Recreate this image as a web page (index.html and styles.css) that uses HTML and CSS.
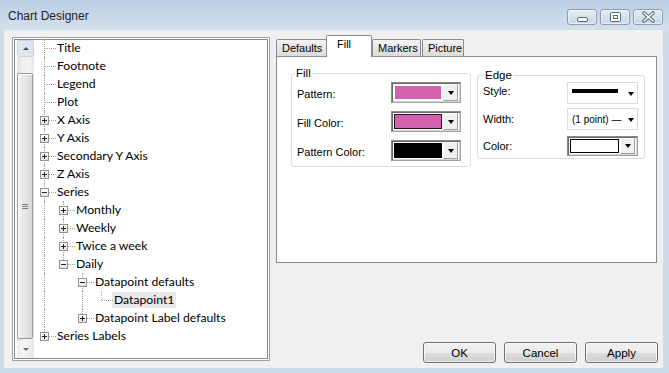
FILE: index.html
```html
<!DOCTYPE html>
<html lang="en">
<head>
  <meta charset="UTF-8">
  <title>Chart Designer</title>
  <link rel="stylesheet" href="styles.css">
</head>
<body>
<div class="window">
  <div class="titlebar">
    <span class="caption">Chart Designer</span>
    <div class="capbtns">
      <span class="capbtn">
        <svg width="28" height="14" viewBox="0 0 28 14"><rect x="9.5" y="7.5" width="10" height="4" rx="1.5" fill="#fff" stroke="#56647a"/></svg>
      </span>
      <span class="capbtn">
        <svg width="28" height="14" viewBox="0 0 28 14"><rect x="9.5" y="2.5" width="10" height="9" rx="1" fill="#fff" stroke="#56647a"/><rect x="12.5" y="5.5" width="4" height="3" fill="none" stroke="#56647a"/></svg>
      </span>
      <span class="capbtn">
        <svg width="27" height="14" viewBox="0 0 27 14"><path d="M9 3 L18 11 M18 3 L9 11" stroke="#56647a" stroke-width="3.6" stroke-linecap="round"/><path d="M9 3 L18 11 M18 3 L9 11" stroke="#fff" stroke-width="1.6" stroke-linecap="round"/></svg>
      </span>
    </div>
  </div>

  <div class="client">
    <!-- tree of chart parts -->
    <div class="tree">
      <div class="vscroll">
        <div class="sbtn up"><span class="tri-up"></span></div>
        <div class="track">
          <div class="thumb"><span class="grip"></span></div>
        </div>
        <div class="sbtn down"><span class="tri-down"></span></div>
      </div>
      <div class="nodes">
        <div class="row"><span class="c t"></span><span class="txt">Title</span></div>
        <div class="row"><span class="c t"></span><span class="txt">Footnote</span></div>
        <div class="row"><span class="c t"></span><span class="txt">Legend</span></div>
        <div class="row"><span class="c t"></span><span class="txt">Plot</span></div>
        <div class="row"><span class="c t"><i class="box plus"></i></span><span class="txt">X Axis</span></div>
        <div class="row"><span class="c t"><i class="box plus"></i></span><span class="txt">Y Axis</span></div>
        <div class="row"><span class="c t"><i class="box plus"></i></span><span class="txt">Secondary Y Axis</span></div>
        <div class="row"><span class="c t"><i class="box plus"></i></span><span class="txt">Z Axis</span></div>
        <div class="row"><span class="c t"><i class="box"></i></span><span class="txt">Series</span></div>
        <div class="row"><span class="c v"></span><span class="c t"><i class="box plus"></i></span><span class="txt">Monthly</span></div>
        <div class="row"><span class="c v"></span><span class="c t"><i class="box plus"></i></span><span class="txt">Weekly</span></div>
        <div class="row"><span class="c v"></span><span class="c t"><i class="box plus"></i></span><span class="txt">Twice a week</span></div>
        <div class="row"><span class="c v"></span><span class="c l"><i class="box"></i></span><span class="txt">Daily</span></div>
        <div class="row"><span class="c v"></span><span class="c"></span><span class="c t"><i class="box"></i></span><span class="txt">Datapoint defaults</span></div>
        <div class="row"><span class="c v"></span><span class="c"></span><span class="c v"></span><span class="c l"></span><span class="txt sel">Datapoint1</span></div>
        <div class="row"><span class="c v"></span><span class="c"></span><span class="c l"><i class="box plus"></i></span><span class="txt">Datapoint Label defaults</span></div>
        <div class="row"><span class="c l"><i class="box plus"></i></span><span class="txt">Series Labels</span></div>
      </div>
    </div>

    <div class="side">
      <div class="tabs">
        <span class="tab t-defaults">Defaults</span>
        <span class="tab t-fill active">Fill</span>
        <span class="tab t-markers">Markers</span>
        <span class="tab t-picture">Picture</span>
      </div>
      <div class="panel">
        <fieldset class="group g-fill">
          <legend>Fill</legend>
          <div class="frow first">
            <span>Pattern:</span>
            <span class="dd"><span class="sw pattern"></span><span class="arr"></span></span>
          </div>
          <div class="frow">
            <span>Fill Color:</span>
            <span class="dd"><span class="sw fillc"></span><span class="arr"></span></span>
          </div>
          <div class="frow">
            <span>Pattern Color:</span>
            <span class="dd"><span class="sw black"></span><span class="arr"></span></span>
          </div>
        </fieldset>

        <fieldset class="group g-edge">
          <legend>Edge</legend>
          <div class="erow r-style">
            <span>Style:</span>
            <span class="fdd"><span class="stroke"></span><span class="small-arr"></span></span>
          </div>
          <div class="erow r-width">
            <span>Width:</span>
            <span class="fdd"><span class="wtxt">(1 point) —</span><span class="small-arr"></span></span>
          </div>
          <div class="erow r-color">
            <span>Color:</span>
            <span class="dd"><span class="sw white"></span><span class="arr"></span></span>
          </div>
        </fieldset>
      </div>

      <div class="btns">
        <button class="btn">OK</button>
        <button class="btn">Cancel</button>
        <button class="btn">Apply</button>
      </div>
    </div>
  </div>
</div>
</body>
</html>
```

FILE: styles.css
```css
* {
  box-sizing: border-box;
}

body {
  margin: 0;
  background: #cedcec;
  font-family: "Liberation Sans", Arial, sans-serif;
}

.window {
  width: 669px;
  height: 373px;
  background: #cfdcec;
  padding: 0 6px 5px 4px;
}

/* title bar */
.titlebar {
  height: 30px;
  margin: 0 -6px 0 -4px;
  padding: 0 6px 0 8px;
  display: flex;
  align-items: flex-start;
  background: linear-gradient(#b9cde3, #cbdaea 60%, #d2dfed);
}

.caption {
  font-size: 12px;
  color: #222;
  line-height: 14px;
  margin-top: 9px;
}

.capbtns {
  margin-left: auto;
  margin-top: 9px;
  display: flex;
  gap: 3px;
}

.capbtn {
  width: 30px;
  height: 16px;
  border: 1px solid #8b9bb0;
  border-radius: 3px;
  background: linear-gradient(#e6edf5, #d6e1ec 50%, #cad7e6);
  box-shadow: inset 0 0 0 1px rgba(255,255,255,0.55);
  display: flex;
  align-items: center;
  justify-content: center;
}

.capbtn svg {
  display: block;
}

/* client area */
.client {
  height: 338px;
  background: #f0f0f0;
  display: flex;
  align-items: flex-start;
  padding: 5px 0 0 8px;
}

.tree {
  width: 258px;
  height: 324px;
  margin-top: 2px;
  background: #fff;
  border: 1px solid #a0a0a0;
  box-shadow: inset 0 0 0 1px #fff, inset 0 0 0 2px #828790;
  padding: 2px 2px 2px 4px;
  display: flex;
  align-items: flex-start;
}

.vscroll {
  width: 17px;
  height: 318px;
  display: flex;
  flex-direction: column;
  flex: none;
}

.sbtn {
  height: 17px;
  display: flex;
  align-items: center;
  justify-content: center;
}

.sbtn.up {
  background: linear-gradient(90deg, #e3ebf4, #d9e4ef);
  border: 1px solid #c9d5e2;
  border-radius: 2px;
}

.sbtn.down {
  background: linear-gradient(90deg, #ececec, #f6f6f6 40%, #e6e6e6);
}

.tri-up {
  width: 0;
  height: 0;
  border-style: solid;
  border-color: transparent transparent #4d4d4d;
  border-width: 0 3px 3px;
}

.tri-down {
  width: 0;
  height: 0;
  border-style: solid;
  border-color: #6a6a6a transparent transparent;
  border-width: 3px 3px 0;
}

.track {
  flex: 1;
  padding: 16px 1px 2px 0;
  background: linear-gradient(90deg, #e0e0e0, #efefef 30%, #f3f3f3 70%, #e8e8e8);
}

.thumb {
  height: 266px;
  border: 1px solid #979797;
  border-radius: 2px;
  background: linear-gradient(90deg, #f4f4f4, #e6e6e6 50%, #d8d8d8);
  box-shadow: inset 1px 1px 0 #fff;
  display: flex;
  align-items: center;
  justify-content: center;
}

.grip {
  width: 6px;
  height: 5px;
  background: repeating-linear-gradient(#7a7a7a 0 1px, transparent 1px 2px);
}

/* tree rows */
.nodes {
  margin: -1px 0 0 1px;
  font-family: Lato, "Liberation Sans", sans-serif;
  font-size: 12.2px;
  color: #000;
}

.row {
  display: flex;
  height: 18px;
}

.c {
  width: 19px;
  flex: none;
  position: relative;
}

.c.v::before,
.c.t::before,
.c.l::before {
  content: '';
  position: absolute;
  left: 9px;
  top: 0;
  bottom: 0;
  border-left: 1px dotted #a0a0a0;
}

.c.l::before {
  bottom: 9px;
}

.c.t::after,
.c.l::after {
  content: '';
  position: absolute;
  left: 10px;
  top: 9px;
  width: 11px;
  border-top: 1px dotted #a0a0a0;
}

.box {
  position: absolute;
  left: 5px;
  top: 5px;
  width: 9px;
  height: 9px;
  border: 1px solid #919191;
  background: linear-gradient(#fff, #e4e4e4);
  z-index: 1;
}

.box::before {
  content: '';
  position: absolute;
  left: 1px;
  top: 3px;
  width: 5px;
  height: 1px;
  background: #222;
}

.box.plus::after {
  content: '';
  position: absolute;
  left: 3px;
  top: 1px;
  width: 1px;
  height: 5px;
  background: #222;
}

.txt {
  margin: 1px 0 0 1px;
  padding: 0 2px;
  height: 16px;
  line-height: 16px;
  white-space: nowrap;
}

.txt.sel {
  background: #e8e8e8;
}

/* right side */
.side {
  margin-left: 4px;
  width: 384px;
  font-size: 11px;
  color: #000;
}

.tabs {
  display: flex;
  align-items: flex-end;
  height: 21px;
  padding-left: 2px;
}

.tab {
  height: 17px;
  border: 1px solid #898c95;
  border-bottom: 0;
  border-radius: 2px 2px 0 0;
  background: linear-gradient(#f4f4f4, #e7e7e7 50%, #dcdcdc);
  line-height: 15px;
  padding: 1px 0 0 5px;
}

.t-defaults { width: 51px; }
.t-fill { width: 46px; }
.t-markers { width: 49px; }
.t-picture { width: 42px; margin-left: 1px; }

.tab.active {
  height: 22px;
  margin-bottom: -1px;
  background: #fff;
  padding: 1px 0 0 10px;
  position: relative;
  z-index: 1;
  margin-left: -1px;
}

.panel {
  margin-left: 2px;
  width: 381px;
  height: 207px;
  border: 1px solid #898c95;
  background: #fff;
  display: flex;
  align-items: flex-start;
  gap: 6px;
  padding: 9px 0 0 14px;
}

.group {
  margin: 0;
  padding: 0 0 5px;
  border: 1px solid #d5dfe5;
  border-radius: 3px;
  min-width: 0;
}

.group legend {
  padding: 0 1px;
  margin-left: 3px;
  line-height: 14px;
  font-size: 11.5px;
}

.g-fill {
  width: 180px;
}

.g-edge {
  width: 168px;
  margin-top: 2px;
  padding-bottom: 2px;
}

.g-edge legend {
  margin-left: 6px;
}

.frow {
  display: flex;
  align-items: center;
  justify-content: space-between;
  height: 21px;
  padding: 0 9px 0 5px;
  margin-top: 8px;
}

.frow span:first-child {
  padding-top: 2px;
}

.frow.first {
  margin-top: 2px;
}

.erow {
  display: flex;
  align-items: center;
  justify-content: space-between;
  padding: 0 6px 0 5px;
}

.r-style { height: 22px; }
.r-width { height: 22px; margin-top: 4px; }
.r-color { height: 20px; margin-top: 6px; }

.r-style span:first-child {
  margin-top: -4px;
}

/* sunken colour dropdown */
.dd {
  width: 70px;
  height: 21px;
  display: flex;
  border: 1px solid #a0a0a0;
  border-top-color: #8a8a8a;
  border-left-color: #8a8a8a;
  box-shadow: inset 1px 1px 0 #6a6a6a, inset -1px -1px 0 #d8d8d8;
  padding: 2px 2px 2px 2px;
  background: #fff;
}

.r-color .dd {
  width: 71px;
  height: 20px;
}

.sw {
  flex: 1;
  margin-right: 1px;
}

.sw.pattern {
  background: #d262ad;
  border: 1px solid #fff;
}

.sw.fillc {
  background: #d262ad;
  border: 1px solid #2b1024;
}

.sw.black {
  background: #000;
}

.sw.white {
  background: #fff;
  border: 1px solid #000;
}

.arr {
  width: 15px;
  flex: none;
  margin: -1px 0 -1px 0;
  background: #f0f0f0;
  border: 1px solid;
  border-color: #fff #a0a0a0 #a0a0a0 #fff;
  display: flex;
  align-items: center;
  justify-content: center;
}

.arr::after {
  content: '';
  border-style: solid;
  border-color: #000 transparent transparent;
  border-width: 4px 3.5px 0;
}

/* flat dropdowns */
.fdd {
  width: 71px;
  height: 22px;
  border: 1px solid #dcdcdc;
  background: #fff;
  display: flex;
  align-items: center;
  padding: 0 3px 0 4px;
}

.stroke {
  width: 46px;
  height: 4px;
  background: #000;
}

.wtxt {
  font-size: 10px;
  white-space: nowrap;
}

.small-arr {
  margin-left: auto;
  margin-top: 2px;
  border-style: solid;
  border-color: #000 transparent transparent;
  border-width: 4px 3.5px 0;
}

/* buttons */
.btns {
  display: flex;
  justify-content: flex-end;
  gap: 8px;
  margin-top: 79px;
}

.btn {
  width: 73px;
  height: 21px;
  padding: 0;
  border: 1px solid #707070;
  border-radius: 3px;
  background: linear-gradient(#f2f2f2, #ebebeb 50%, #dddddd 51%, #cfcfcf);
  box-shadow: inset 0 0 0 1px rgba(255,255,255,0.7);
  font-family: "Liberation Sans", Arial, sans-serif;
  font-size: 11.5px;
  color: #000;
}
```
